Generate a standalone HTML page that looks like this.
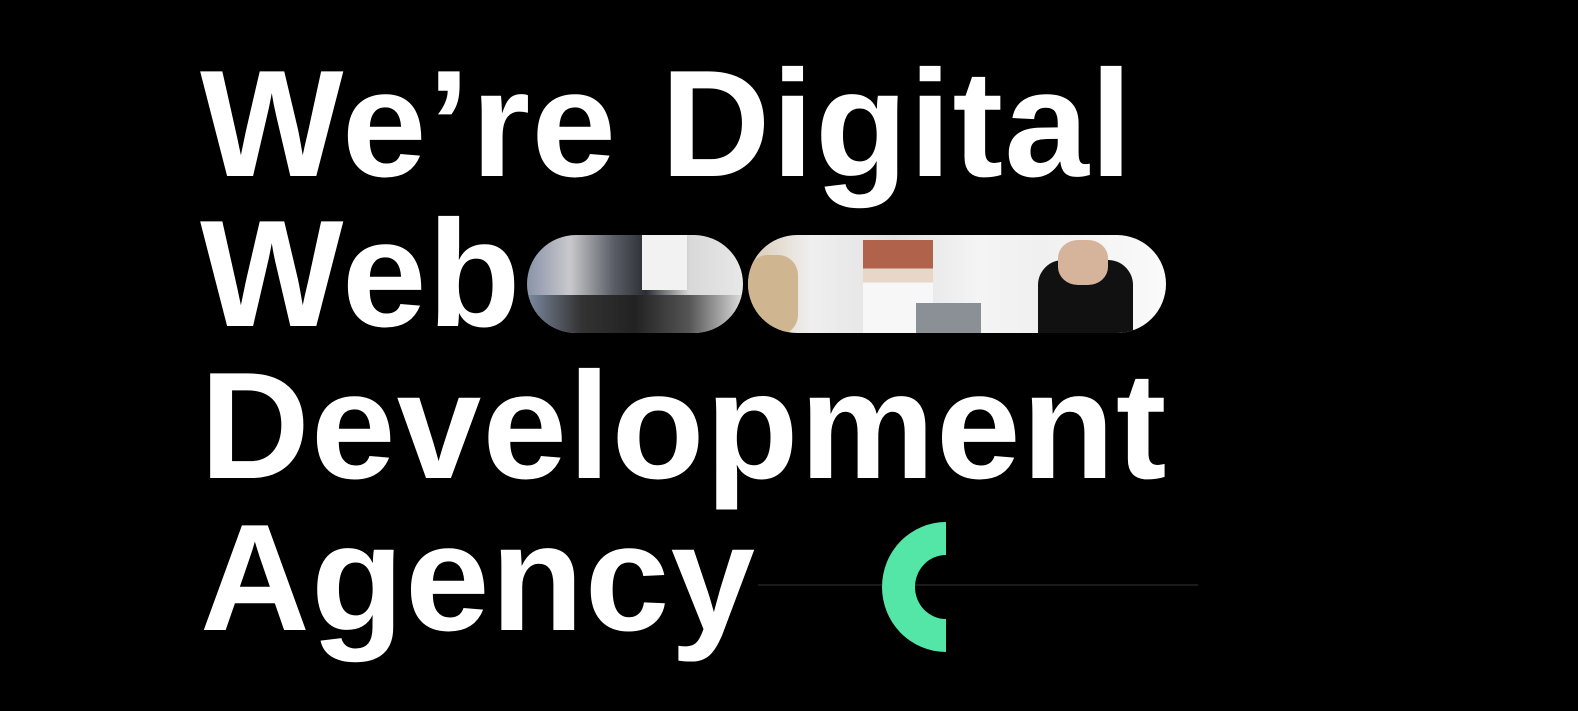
<!DOCTYPE html>
<html><head><style>
html,body{margin:0;padding:0;background:#000;width:1578px;height:711px;overflow:hidden}
.t{position:absolute;left:200px;color:#fff;font-family:"Liberation Sans",Arial,sans-serif;font-weight:700;font-size:152px;line-height:1;letter-spacing:1.2px;white-space:nowrap}
.pill{position:absolute;border-radius:50px;overflow:hidden}
</style></head><body>
<div class="t" style="top:48px">We’re Digital</div>
<div class="t" style="top:198px">Web</div>
<div class="t" style="top:350px">Development</div>
<div class="t" style="top:502px">Agency</div>
<div class="pill" style="left:527px;top:235px;width:216px;height:98px;background:linear-gradient(90deg,#8a93a8 0%,#c9c9cc 20%,#5a5e66 40%,#2b2e35 55%,#d8d8d8 75%,#e8e8e8 100%)">
<div style="position:absolute;left:0;top:60px;width:216px;height:40px;background:linear-gradient(90deg,#7d8aa0,#333,#222,#555,#ddd)"></div>
<div style="position:absolute;left:115px;top:0;width:45px;height:55px;background:#f2f2f2"></div>
</div>
<div class="pill" style="left:748px;top:235px;width:418px;height:98px;background:linear-gradient(90deg,#d9cbb5 0%,#efefef 15%,#e2e2e2 35%,#f4f4f4 55%,#f0f0f0 70%,#fafafa 100%)">
<div style="position:absolute;left:0;top:20px;width:50px;height:80px;background:#cfb590;border-radius:20px"></div>
<div style="position:absolute;left:115px;top:5px;width:70px;height:95px;background:linear-gradient(#b0624a 0 30%,#e8d6c9 30% 45%,#f7f7f7 45%)"></div>
<div style="position:absolute;left:168px;top:68px;width:65px;height:32px;background:#8b8f96"></div>
<div style="position:absolute;left:290px;top:25px;width:95px;height:75px;background:#111;border-radius:25px 25px 0 0"></div>
<div style="position:absolute;left:310px;top:5px;width:50px;height:45px;background:#d6b39b;border-radius:40%"></div>
</div>
<div style="position:absolute;left:758px;top:584px;width:440px;height:2px;background:#1a1a1a"></div>
<svg style="position:absolute;left:0;top:0" width="1578" height="711">
<path d="M946 522 A64 65 0 0 0 946 652 L946 619 A31 32 0 0 1 946 555 Z" fill="#53e6a6"/>
</svg>
</body></html>
